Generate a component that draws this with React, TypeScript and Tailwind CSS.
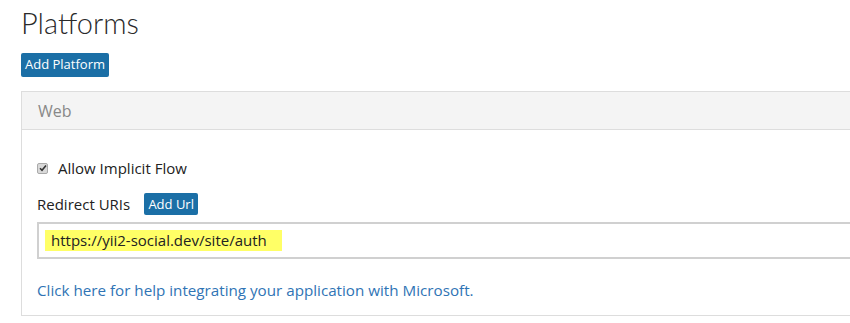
import React from "react";

const font = { fontFamily: '"Open Sans", "Noto Sans", Arial, sans-serif' };
const thin = { fontFamily: 'Lato, "Open Sans", sans-serif' };

const BlueButton = ({ children, className }: { children: React.ReactNode; className?: string }) => (
  <button
    className={`bg-[#1b6fa6] text-white text-[13px] font-medium rounded-[2px] flex items-center justify-center ${className ?? ""}`}
  >
    {children}
  </button>
);

const App = () => {
  return (
    <div className="w-[850px] h-[323px] bg-white overflow-hidden text-[#333]" style={font}>
      {/* Heading */}
      <h1 className="pl-[21px] pt-[4px] text-[29px] font-light leading-[38px] text-[#2a2a2a]" style={thin}>
        Platforms
      </h1>

      <div className="pl-[21px] pt-[11px]">
        <BlueButton className="w-[88px] h-[24px]">Add Platform</BlueButton>
      </div>

      {/* Web panel */}
      <section className="ml-[21px] mt-[14px] w-[840px] border border-[#dddddd] border-r-0 h-[225px]">
        <header className="h-[38px] bg-[#f4f4f4] border-b border-[#dddddd] flex items-center pl-[16px]">
          <span className="text-[16px] text-[#888]">Web</span>
        </header>

        <div className="pl-[15px] pt-[28px]">
          <label className="flex items-center gap-[10px]">
            <span className="w-[11px] h-[11px] bg-[#d9d9d9] border border-[#aaa] rounded-[2px] flex items-center justify-center">
              <svg width="8" height="8" viewBox="0 0 8 8">
                <path d="M1 4.2 L3 6.2 L7 1.5" stroke="#333" strokeWidth="1.6" fill="none" />
              </svg>
            </span>
            <span className="text-[15px] leading-[20px] text-[#222]">Allow Implicit Flow</span>
          </label>

          <div className="flex items-center gap-[14px] mt-[15px]">
            <span className="text-[15px] text-[#222]">Redirect URIs</span>
            <BlueButton className="w-[54px] h-[22px]">Add Url</BlueButton>
          </div>

          <div className="mt-[6px] h-[37px] border-2 border-r-0 border-[#d0d0d0] flex items-center pl-[6px]">
            <span className="bg-[#ffff66] h-[21px] w-[237px] flex items-center pl-[6px] text-[15px] text-[#222]">
              https://yii2-social.dev/site/auth
            </span>
          </div>

          <a className="block mt-[20px] text-[15.2px] text-[#2f74b5]">
            Click here for help integrating your application with Microsoft.
          </a>
        </div>
      </section>
    </div>
  );
};

export default App;
